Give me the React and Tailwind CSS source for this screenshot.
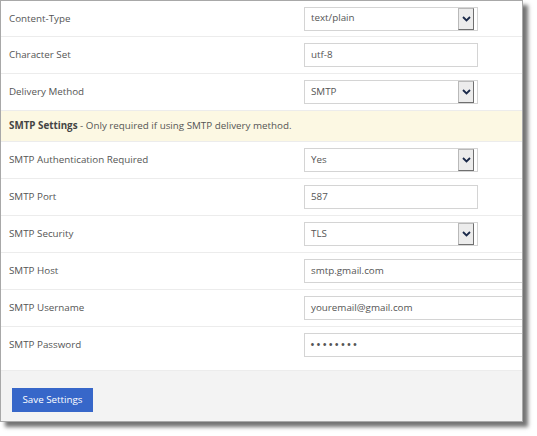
import React from 'react';

const FONT = { fontFamily: '"Open Sans", "Liberation Sans", sans-serif' };

function SelectBox({ value }) {
  return (
    <div className="flex h-[24px] w-[174px] shrink-0 items-center border border-[#d4d4d4] bg-white pr-[3px]">
      <span className="flex-1 pl-[6px] text-[9.8px] text-[#555]">{value}</span>
      <span className="flex h-[22px] w-[16px] items-center justify-center border border-[#b9b9b9] border-r-[#6f6f6f] border-b-[#6f6f6f] bg-[#ececec]">
        <svg width="9" height="6" viewBox="0 0 9 6">
          <path d="M1 1 L4.5 4.5 L8 1" fill="none" stroke="#1b2a4a" strokeWidth="1.8" />
        </svg>
      </span>
    </div>
  );
}

function TextBox({ value, wide }) {
  return (
    <div
      className={`flex h-[24px] shrink-0 items-center border border-[#d4d4d4] bg-white pl-[6px] text-[9.8px] text-[#555] ${
        wide ? 'w-[230px]' : 'w-[174px]'
      }`}
    >
      {value}
    </div>
  );
}

function Row({ label, children, first, last }) {
  let h = 'h-[37px]';
  if (first) h = 'h-[36px]';
  if (last) h = 'h-[44px] pb-[7px]';
  return (
    <div className={`flex items-center border-b border-[#ececec] ${h}`}>
      <div className="w-[303px] shrink-0 pl-[8px] pt-[1px] text-[9.8px] text-[#555]">{label}</div>
      {children}
    </div>
  );
}

export default function App() {
  return (
    <div className="h-[436px] w-[537px] bg-white" style={FONT}>
      <div className="h-[422px] w-[523px] overflow-hidden border border-[#a8a8a8] bg-white shadow-[5px_5px_4px_rgba(0,0,0,0.55)]">
        <Row label="Content-Type" first>
          <SelectBox value="text/plain" />
        </Row>
        <Row label="Character Set">
          <TextBox value="utf-8" />
        </Row>
        <Row label="Delivery Method">
          <SelectBox value="SMTP" />
        </Row>
        <div className="flex h-[31px] items-center border-b border-[#ececec] bg-[#fcf8e3] pl-[8px] text-[9.8px] text-[#555]">
          <span className="font-bold text-[#444]">SMTP Settings</span>
          <span>&nbsp;- Only required if using SMTP delivery method.</span>
        </div>
        <Row label="SMTP Authentication Required">
          <SelectBox value="Yes" />
        </Row>
        <Row label="SMTP Port">
          <TextBox value="587" />
        </Row>
        <Row label="SMTP Security">
          <SelectBox value="TLS" />
        </Row>
        <Row label="SMTP Host">
          <TextBox value="smtp.gmail.com" wide />
        </Row>
        <Row label="SMTP Username">
          <TextBox value="youremail@gmail.com" wide />
        </Row>
        <Row label="SMTP Password" last>
          <div className="flex h-[24px] w-[230px] shrink-0 items-center border border-[#d4d4d4] bg-white pl-[5px] text-[13px] tracking-[1.2px] text-[#555]">
            ••••••••
          </div>
        </Row>
        <div className="h-[53px] bg-[#f3f3f3] pl-[11px] pt-[14px]">
          <button className="h-[24px] w-[81px] bg-[#3767c9] text-[9.8px] text-white">Save Settings</button>
        </div>
      </div>
    </div>
  );
}
